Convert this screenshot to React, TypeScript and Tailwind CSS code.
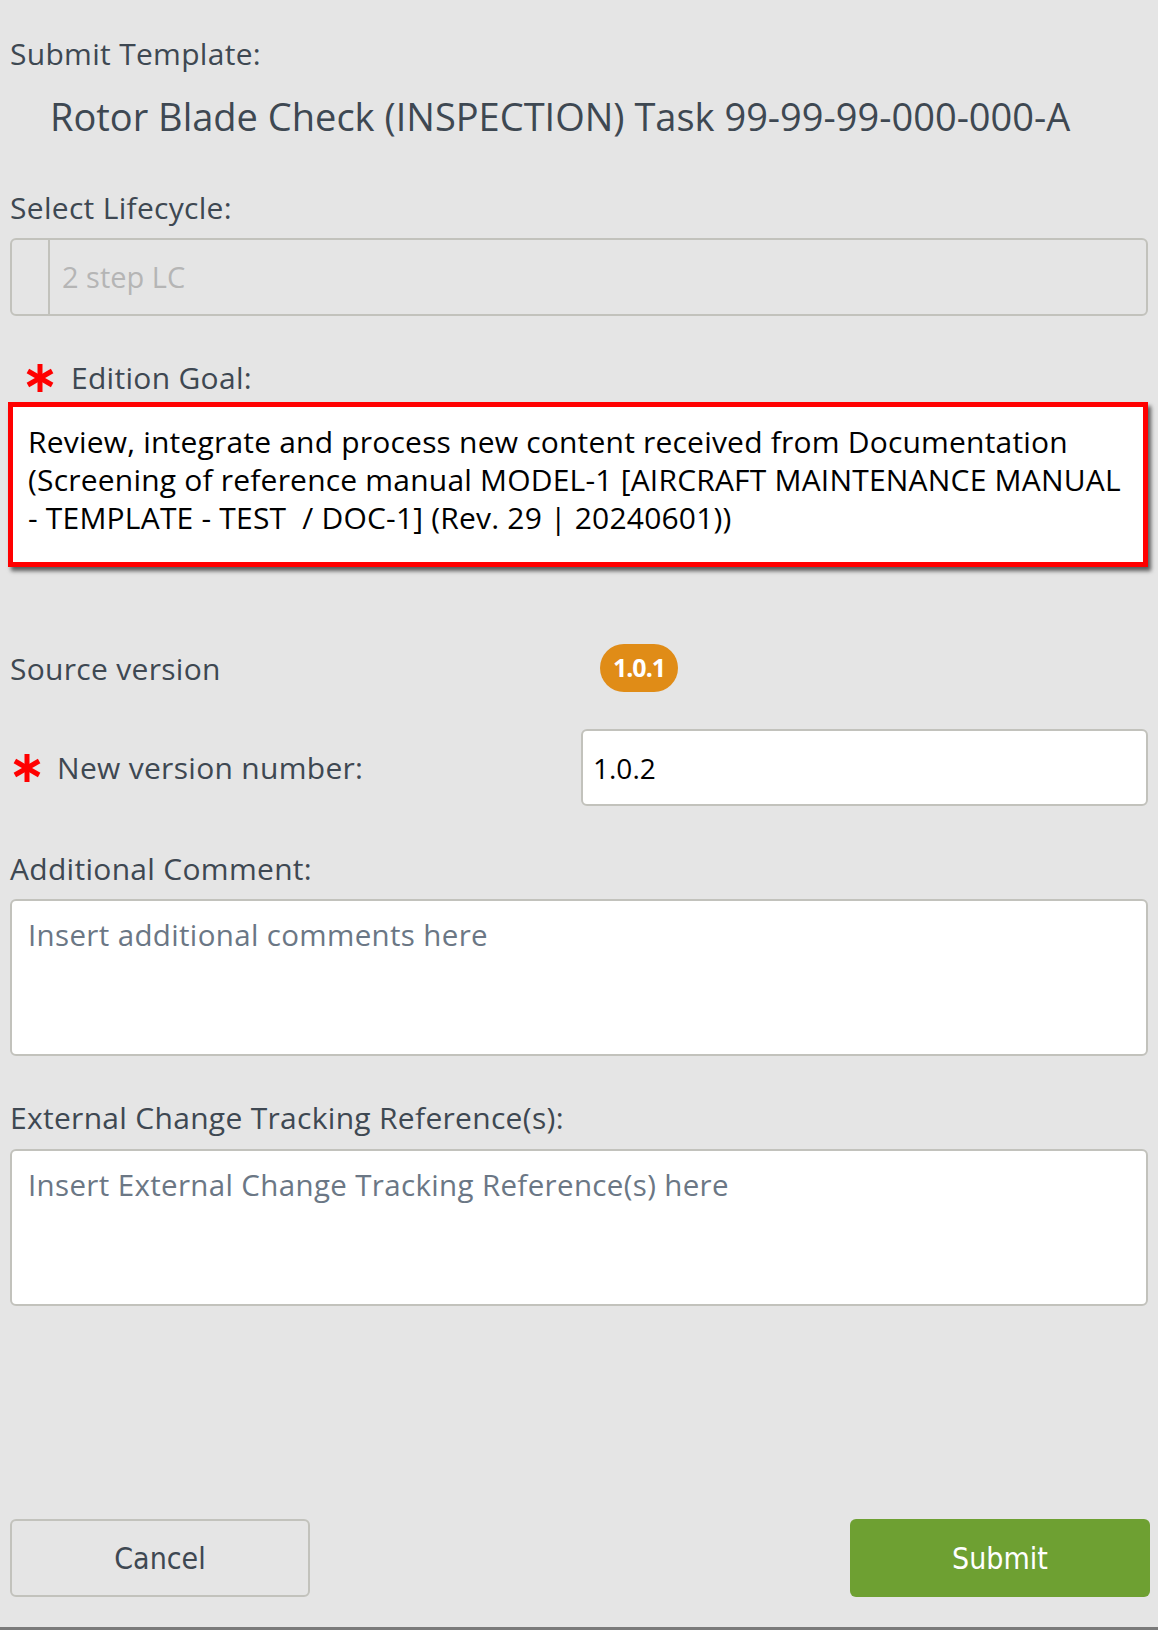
import React from "react";

const font = { fontFamily: '"Open Sans", "Noto Sans", sans-serif' };

const Asterisk = () => (
  <svg width="30" height="30" viewBox="0 0 30 30" className="shrink-0">
    <g stroke="#ff0000" strokeWidth="5" strokeLinecap="butt">
      <line x1="15" y1="1" x2="15" y2="29" />
      <line x1="2.9" y1="8" x2="27.1" y2="22" />
      <line x1="2.9" y1="22" x2="27.1" y2="8" />
    </g>
  </svg>
);

const Label = (props: { children: React.ReactNode; className?: string }) => (
  <div className={"h-[40px] leading-[40px] text-[30px] tracking-[0.3px] text-[#3e4852] whitespace-nowrap " + (props.className || "")}>
    {props.children}
  </div>
);

export default function App() {
  return (
    <div className="w-[1158px] h-[1630px] bg-[#e5e5e5] flex flex-col" style={font}>
      <div className="flex flex-col px-[10px] pt-[34px] flex-1">
        <Label>Submit Template:</Label>
        <div className="mt-[20px] h-[44px] leading-[44px] pl-[40px] text-[38px] text-[#3e4852] whitespace-nowrap">
          Rotor Blade Check (INSPECTION) Task 99-99-99-000-000-A
        </div>

        <Label className="mt-[50px]">Select Lifecycle:</Label>
        <div className="mt-[10px] h-[78px] flex border-2 border-[#c2c2bc] rounded-[6px]">
          <div className="w-[38px] border-r-2 border-[#c2c2bc]" />
          <div className="flex items-center pl-[12px] text-[29px] text-[#b5b5b5]">2 step LC</div>
        </div>

        <div className="mt-[41px] h-[40px] flex items-center">
          <div className="ml-[15px] mt-[2px]">
            <Asterisk />
          </div>
          <span className="ml-[16px] text-[30px] tracking-[0.3px] text-[#3e4852]">Edition Goal:</span>
        </div>
        <div className="mt-[5px] -ml-[2px] h-[165px] bg-white border-[5px] border-[#ff0000] shadow-[3px_4px_4px_rgba(0,0,0,0.6)] pl-[15px] pt-[16px] text-[30px] tracking-[0.2px] leading-[38px] text-black whitespace-nowrap">
          <div>Review, integrate and process new content received from Documentation</div>
          <div>(Screening of reference manual MODEL-1 [AIRCRAFT MAINTENANCE MANUAL</div>
          <div>- TEMPLATE - TEST&nbsp; / DOC-1] (Rev. 29 | 20240601))</div>
        </div>

        <div className="mt-[77px] h-[48px] flex items-center">
          <div className="w-[590px] text-[30px] tracking-[0.3px] text-[#3e4852]">Source version</div>
          <div className="h-[48px] w-[78px] rounded-full bg-[#e08c17] text-white font-bold text-[25px] flex items-center justify-center tracking-[-1px]">
            1.0.1
          </div>
        </div>

        <div className="mt-[37px] flex items-center">
          <div className="w-[571px] flex items-center">
            <div className="ml-[2px]">
              <Asterisk />
            </div>
            <span className="ml-[15px] text-[30px] tracking-[0.3px] text-[#3e4852]">New version number:</span>
          </div>
          <div className="flex-1 h-[77px] bg-white border-2 border-[#c2c2bc] rounded-[6px] flex items-center pl-[10px] text-[28px] text-black">
            1.0.2
          </div>
        </div>

        <Label className="mt-[43px]">Additional Comment:</Label>
        <div className="mt-[10px] h-[157px] bg-white border-2 border-[#c2c2bc] rounded-[6px] pl-[16px] pt-[14px] text-[29.5px] tracking-[0.35px] leading-[40px] text-[#6b7785]">
          Insert additional comments here
        </div>

        <Label className="mt-[42px]">External Change Tracking Reference(s):</Label>
        <div className="mt-[11px] h-[157px] bg-white border-2 border-[#c2c2bc] rounded-[6px] pl-[16px] pt-[14px] text-[29.5px] tracking-[0.35px] leading-[40px] text-[#6b7785]">
          Insert External Change Tracking Reference(s) here
        </div>

        <div className="mt-[213px] flex justify-between">
          <button
            className="w-[300px] h-[78px] border-2 border-[#c2c2bc] rounded-[6px] text-[30px] text-[#3e4852]"
            style={{ fontFamily: '"Liberation Sans Narrow", "DejaVu Sans Condensed", sans-serif' }}
          >
            Cancel
          </button>
          <button
            className="w-[300px] h-[78px] -mr-[2px] rounded-[6px] bg-[#6ea032] text-[30px] text-white"
            style={{ fontFamily: '"Liberation Sans Narrow", "DejaVu Sans Condensed", sans-serif' }}
          >
            Submit
          </button>
        </div>
      </div>
      <div className="h-[3px] bg-[#7a7a7a]" />
    </div>
  );
}
